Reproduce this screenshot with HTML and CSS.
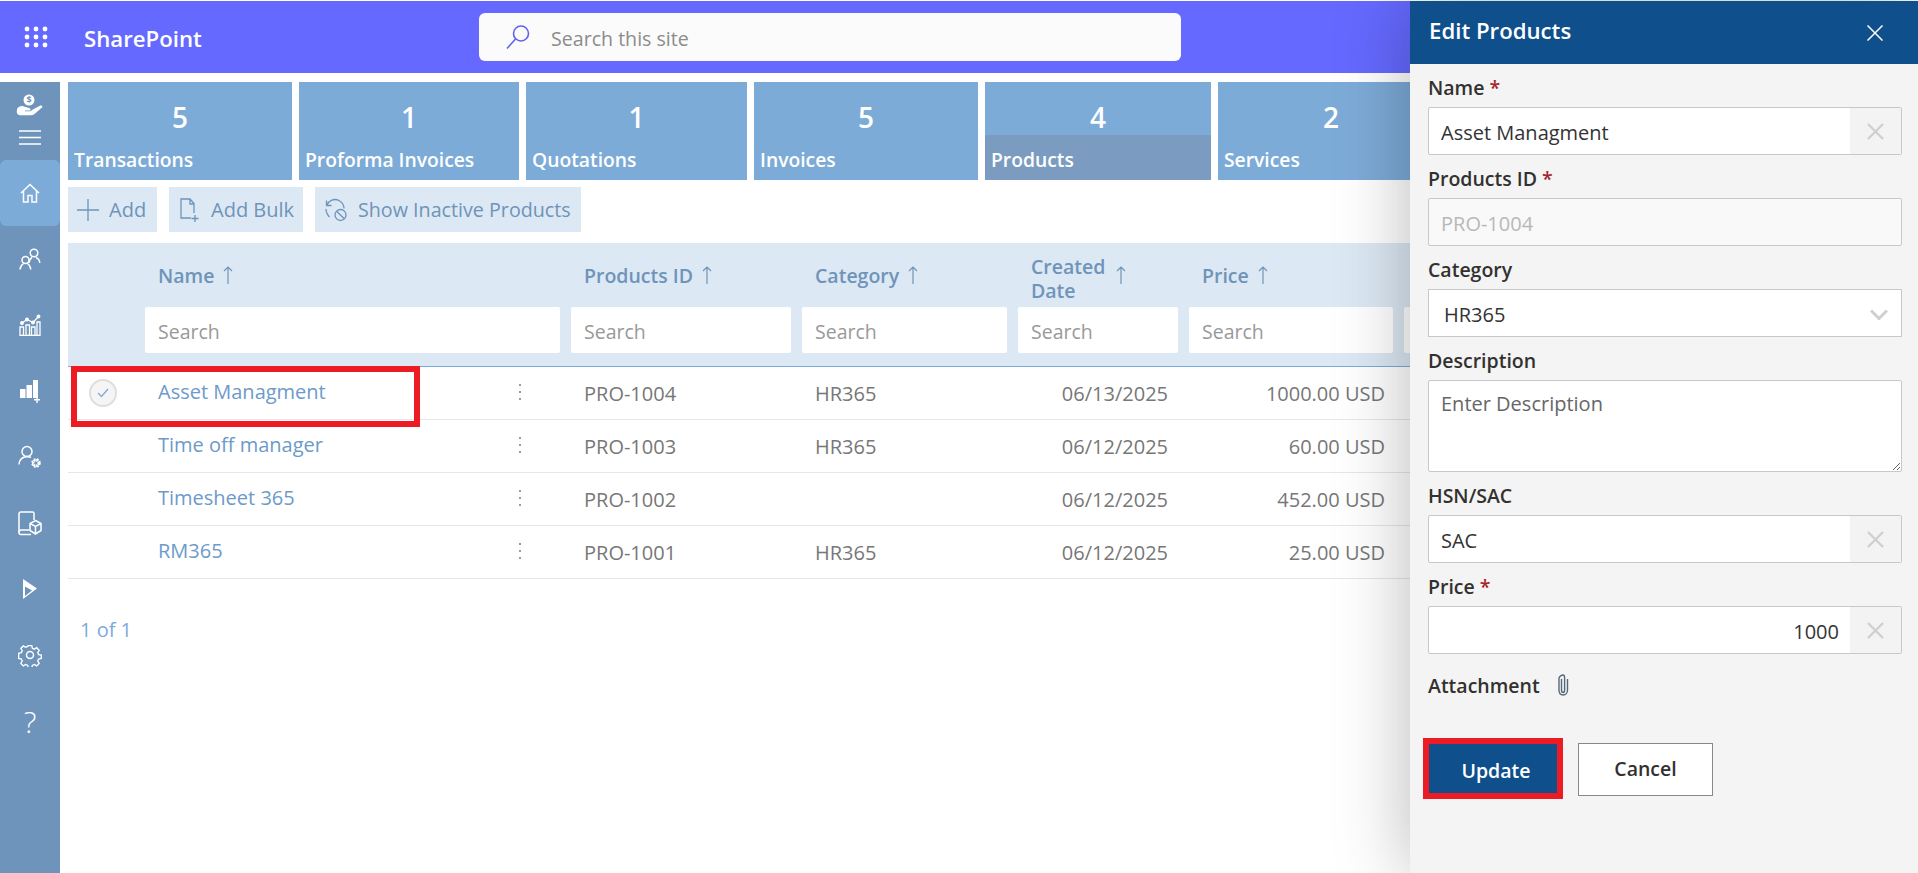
FILE: index.html
```html
<!DOCTYPE html>
<html lang="en">
<head>
    <meta charset="UTF-8">
    <meta name="viewport" content="width=device-width, initial-scale=1.0">
    <title>Edit Products</title>
    <link rel="stylesheet" href="styles.css">
</head>
<body>
    <div class="top-bar">
        <svg class="waffle" width="24" height="22" viewBox="0 0 24 22" fill="#fff">
            <circle cx="3" cy="3" r="2.4"/><circle cx="12" cy="3" r="2.4"/><circle cx="21" cy="3" r="2.4"/>
            <circle cx="3" cy="11" r="2.4"/><circle cx="12" cy="11" r="2.4"/><circle cx="21" cy="11" r="2.4"/>
            <circle cx="3" cy="19" r="2.4"/><circle cx="12" cy="19" r="2.4"/><circle cx="21" cy="19" r="2.4"/>
        </svg>
        <div class="brand">SharePoint</div>
        <div class="site-search">
            <svg width="26" height="26" viewBox="0 0 26 26" fill="none" stroke="#5f63f0" stroke-width="1.6">
                <circle cx="16" cy="9.5" r="7.5"/><path d="M10.5 15 2 24.5"/>
            </svg>
            <span>Search this site</span>
        </div>
    </div>

    <div class="app">
        <div class="sidebar">
            <div class="side-top">
                <svg width="28" height="22" viewBox="0 0 28 22" fill="#fff">
                    <circle cx="13" cy="6" r="5.5"/>
                    <text x="13" y="9" class="dollar">$</text>
                    <path d="M1 15c2-3 5-3.500 7-2.500l5 1.500c2 .5 2 2.500 0 2.500H9v.8h5l5.500-3.300 5-2.500c1.500-.5 2.500 1 1.500 2l-7.500 6.500c-1 .8-2 1.200-3.500 1.200H5c-3 0-5-1.500-4-5.200z"/>
                </svg>
                <svg width="22" height="15" viewBox="0 0 22 15" stroke="#fff" stroke-width="1.300">
                    <path d="M0 1h22M0 7.500h22M0 14h22"/>
                </svg>
            </div>
            <div class="side-item active">
                <svg width="20" height="20" viewBox="0 0 20 20" fill="none" stroke="#fff" stroke-width="1.500">
                    <path d="M1 10 10 1.500 19 10M3.500 8v11h4.500v-6.500h4V19h4.500V8"/>
                </svg>
            </div>
            <div class="side-item">
                <svg width="22" height="22" viewBox="0 0 22 22" fill="none" stroke="#fff" stroke-width="1.500">
                    <circle cx="15" cy="5" r="3.800"/><path d="M10 15c.5-4 2-5 3-5.500M17 9.500c2 .8 3.500 2.500 3.800 5.500"/>
                    <circle cx="6.500" cy="12" r="3.500"/><path d="M1 21.500c.3-3 2-5 3.500-6M8.500 15.500c1.500 1 3 3 3.300 6"/>
                </svg>
            </div>
            <div class="side-item">
                <svg width="22" height="22" viewBox="0 0 22 22" fill="none" stroke="#fff" stroke-width="1.300">
                    <path d="M1 21.500h20"/>
                    <path d="M1 13h3.500v8.500H1zM7 11h3.500v10.500H7zM12.500 13h3.500v8.500h-3.500zM18 8h3v13.500h-3z"/>
                    <path d="M3 9l5-3.500 6 3L19.500 2.500"/>
                    <circle cx="3" cy="9" r="1.300" fill="#fff"/><circle cx="8" cy="5.500" r="1.300" fill="#fff"/><circle cx="14" cy="8.500" r="1.300" fill="#fff"/><circle cx="19.500" cy="2.500" r="1.300" fill="#fff"/>
                </svg>
            </div>
            <div class="side-item">
                <svg width="22" height="24" viewBox="0 0 22 24" fill="#fff">
                    <path d="M1 10h5.500v9H1zM7.500 6H13v13H7.500zM14 1h5v18h-5z"/>
                    <path d="M15 20h6v1.400h-6zM17.300 18h1.400v6h-1.400z"/>
                </svg>
            </div>
            <div class="side-item">
                <svg width="24" height="24" viewBox="0 0 24 24" fill="none" stroke="#fff" stroke-width="1.500">
                    <circle cx="9" cy="6.500" r="5"/><path d="M1 19.500c.3-4.500 3-7.500 8-8 2 0 3 .5 4 1"/>
                    <circle cx="18" cy="18" r="2.800" stroke-width="2.400" stroke-dasharray="2 .6"/>
                    <circle cx="18" cy="18" r="4" stroke-width="1.600" stroke-dasharray="1.800 1.400"/>
                </svg>
            </div>
            <div class="side-item">
                <svg width="24" height="25" viewBox="0 0 24 25" fill="none" stroke="#fff" stroke-width="1.500">
                    <path d="M13 23.500H3c-1.300 0-2-1-2-2V3c0-1 .7-2 2-2h11.500c1 0 1.500.7 1.500 1.500V9"/>
                    <path d="M1 21.500c0-1.500 1-2.500 2-2.500h8"/>
                    <path d="M17.500 9.500 23 12.500v7l-5.500 3.500-5.500-3.500v-7zM12 12.500l5.500 3 5.500-3M17.500 15.500V23"/>
                </svg>
            </div>
            <div class="side-item">
                <svg width="14" height="20" viewBox="0 0 14 20" fill="#fff">
                    <path d="M0 0 14 9.500 0 20zM2 7.500v9.500L9 11.500z" fill-rule="evenodd"/>
                </svg>
            </div>
            <div class="side-item">
                <svg width="24" height="24" viewBox="0 0 24 24" fill="none" stroke="#fff" stroke-width="1.500">
                    <circle cx="12" cy="12" r="3.500"/>
                    <path d="M10 1.500h4l.6 3 2.200 1 2.600-1.600 2.800 2.800-1.600 2.600 1 2.200 3 .6v0l-.1 3.800-2.900.6-1 2.200 1.600 2.600-2.800 2.800-2.600-1.600-2.200 1-.6 3h-4l-.6-3-2.200-1-2.600 1.600-2.800-2.800 1.600-2.600-1-2.200-3-.6V10.100l3-.6 1-2.200-1.600-2.600 2.800-2.800 2.600 1.600 2.200-1z" transform="translate(1.200 1.200) scale(.9)"/>
                </svg>
            </div>
            <div class="side-item help">?</div>
        </div>

        <div class="main">
            <div class="tiles">
                <div class="tile w-224"><div class="tile-num">5</div><div class="tile-label">Transactions</div></div>
                <div class="tile w-220"><div class="tile-num">1</div><div class="tile-label">Proforma Invoices</div></div>
                <div class="tile w-221"><div class="tile-num">1</div><div class="tile-label">Quotations</div></div>
                <div class="tile w-224"><div class="tile-num">5</div><div class="tile-label">Invoices</div></div>
                <div class="tile w-226 current"><div class="tile-num">4</div><div class="tile-label">Products</div></div>
                <div class="tile w-226"><div class="tile-num">2</div><div class="tile-label">Services</div></div>
            </div>

            <div class="toolbar">
                <div class="tool tool-add">
                    <svg width="22" height="22" viewBox="0 0 22 22" stroke="#6f94b9" stroke-width="1.300"><path d="M11 0v22M0 11h22"/></svg>
                    <span>Add</span>
                </div>
                <div class="tool tool-bulk">
                    <svg width="19" height="24" viewBox="0 0 19 24" fill="none" stroke="#6f94b9" stroke-width="1.300">
                        <path d="M11 20H1V1h9l4 4.500V15M10 1v5h4M15 17v7M11.500 20.500h7"/>
                    </svg>
                    <span>Add Bulk</span>
                </div>
                <div class="tool tool-inactive">
                    <svg width="22" height="24" viewBox="0 0 22 24" fill="none" stroke="#6f94b9" stroke-width="1.300">
                        <path d="M2 7C4 2.500 9 0 14 2.500c3.500 2 5 4.500 5 8M1 11c0 3.500 1.500 6 3.500 8M1.500 2.500V7.500h5"/>
                        <circle cx="15.500" cy="17" r="5.500"/><path d="M11.700 13.200l7.600 7.600"/>
                    </svg>
                    <span>Show Inactive Products</span>
                </div>
            </div>

            <div class="list">
                <div class="list-head">
                    <div class="head-cell col-name">Name <svg class="sort" width="10" height="18" viewBox="0 0 10 18" fill="none" stroke="#6f94b9" stroke-width="1.200"><path d="M5 18V1M1 5l4-4 4 4"/></svg></div>
                    <div class="head-cell">Products ID <svg class="sort" width="10" height="18" viewBox="0 0 10 18" fill="none" stroke="#6f94b9" stroke-width="1.200"><path d="M5 18V1M1 5l4-4 4 4"/></svg></div>
                    <div class="head-cell">Category <svg class="sort" width="10" height="18" viewBox="0 0 10 18" fill="none" stroke="#6f94b9" stroke-width="1.200"><path d="M5 18V1M1 5l4-4 4 4"/></svg></div>
                    <div class="head-cell"><span class="two-line">Created Date</span> <svg class="sort" width="10" height="18" viewBox="0 0 10 18" fill="none" stroke="#6f94b9" stroke-width="1.200"><path d="M5 18V1M1 5l4-4 4 4"/></svg></div>
                    <div class="head-cell">Price <svg class="sort" width="10" height="18" viewBox="0 0 10 18" fill="none" stroke="#6f94b9" stroke-width="1.200"><path d="M5 18V1M1 5l4-4 4 4"/></svg></div>
                    <div class="head-cell"></div>
                    <input class="col-search col-name" placeholder="Search">
                    <input class="col-search" placeholder="Search">
                    <input class="col-search" placeholder="Search">
                    <input class="col-search" placeholder="Search">
                    <input class="col-search" placeholder="Search">
                    <input class="col-search" placeholder="Search">
                </div>

                <div class="row">
                    <div class="check-cell">
                        <div class="check"><svg width="12" height="10" viewBox="0 0 12 10" fill="none" stroke="#7dabd8" stroke-width="1.300"><path d="M1 5l3.500 3.500L11 1"/></svg></div>
                    </div>
                    <div class="name-cell"><a class="item-link">Asset Managment</a><span class="kebab"></span></div>
                    <div class="cell">PRO-1004</div>
                    <div class="cell">HR365</div>
                    <div class="cell date">06/13/2025</div>
                    <div class="cell price">1000.00 USD</div>
                </div>
                <div class="row">
                    <div class="check-cell"></div>
                    <div class="name-cell"><a class="item-link">Time off manager</a><span class="kebab"></span></div>
                    <div class="cell">PRO-1003</div>
                    <div class="cell">HR365</div>
                    <div class="cell date">06/12/2025</div>
                    <div class="cell price">60.00 USD</div>
                </div>
                <div class="row">
                    <div class="check-cell"></div>
                    <div class="name-cell"><a class="item-link">Timesheet 365</a><span class="kebab"></span></div>
                    <div class="cell">PRO-1002</div>
                    <div class="cell"></div>
                    <div class="cell date">06/12/2025</div>
                    <div class="cell price">452.00 USD</div>
                </div>
                <div class="row">
                    <div class="check-cell"></div>
                    <div class="name-cell"><a class="item-link">RM365</a><span class="kebab"></span></div>
                    <div class="cell">PRO-1001</div>
                    <div class="cell">HR365</div>
                    <div class="cell date">06/12/2025</div>
                    <div class="cell price">25.00 USD</div>
                </div>
            </div>

            <div class="pager">1 of 1</div>
        </div>
    </div>

    <div class="row-mark"></div>

    <div class="panel">
        <div class="panel-head">
            <div class="panel-title">Edit Products</div>
            <svg width="16" height="16" viewBox="0 0 16 16" stroke="#fff" stroke-width="1.500"><path d="M.5.500l15 15M15.500.500l-15 15"/></svg>
        </div>
        <div class="panel-body">
            <label class="field-label">Name <span class="req">*</span></label>
            <div class="text-field">
                <input value="Asset Managment">
                <div class="clear"><svg width="17" height="17" viewBox="0 0 17 17" stroke="#cfcfcf" stroke-width="2.400"><path d="M1 1l15 15M16 1 1 16"/></svg></div>
            </div>

            <label class="field-label">Products ID <span class="req">*</span></label>
            <div class="text-field disabled"><input value="PRO-1004" disabled></div>

            <label class="field-label">Category</label>
            <div class="select-field">
                <span>HR365</span>
                <svg width="18" height="11" viewBox="0 0 18 11" fill="none" stroke="#cfcfcf" stroke-width="3"><path d="M1 1.500l8 8 8-8"/></svg>
            </div>

            <label class="field-label">Description</label>
            <textarea class="area-field" placeholder="Enter Description"></textarea>

            <label class="field-label">HSN/SAC</label>
            <div class="text-field">
                <input value="SAC">
                <div class="clear"><svg width="17" height="17" viewBox="0 0 17 17" stroke="#cfcfcf" stroke-width="2.400"><path d="M1 1l15 15M16 1 1 16"/></svg></div>
            </div>

            <label class="field-label">Price <span class="req">*</span></label>
            <div class="text-field">
                <input class="num" value="1000">
                <div class="clear"><svg width="17" height="17" viewBox="0 0 17 17" stroke="#cfcfcf" stroke-width="2.400"><path d="M1 1l15 15M16 1 1 16"/></svg></div>
            </div>

            <div class="attach-row">
                <span class="attach-label">Attachment</span>
                <svg width="12" height="22" viewBox="0 0 12 22" fill="none" stroke="#56687c" stroke-width="1.400">
                    <path d="M4.500 5v11c0 1.500.6 2.500 1.600 2.500s1.500-1 1.500-2.500V4C7.600 2 7 1 6 1S2 2 2 4.500V16c0 3 1.600 5 4.100 5S10.500 19 10.500 16V5"/>
                </svg>
            </div>

            <div class="actions">
                <button class="btn-update">Update</button>
                <button class="btn-cancel">Cancel</button>
            </div>
        </div>
    </div>
</body>
</html>
```

FILE: styles.css
```css
* {
    box-sizing: border-box;
}

body {
    margin: 0;
    height: 873px;
    overflow: hidden;
    position: relative;
    background-color: #fff;
    font-family: "Open Sans", "Noto Sans", sans-serif;
    font-size: 20px;
    color: #333;
}

.top-bar {
    margin-top: 1px;
    height: 72px;
    background-color: #6569ff;
    display: flex;
    align-items: center;
    padding-left: 24px;
}

.brand {
    margin-left: 36px;
    padding-top: 2px;
    width: 395px;
    color: #fff;
    font-size: 22.2px;
    font-weight: 600;
}

.site-search {
    width: 702px;
    height: 48px;
    background-color: #fbfbfb;
    border-radius: 6px;
    display: flex;
    align-items: center;
    padding-left: 26px;
    color: #8c8c8c;
    font-size: 19.6px;
    gap: 20px;
}

.site-search span {
    padding-top: 2px;
}

.app {
    display: flex;
    padding-top: 9px;
}

.sidebar {
    width: 60px;
    height: 791px;
    flex-shrink: 0;
    background-color: #6e94bb;
}

.side-top {
    height: 78px;
    padding-top: 12px;
    display: flex;
    flex-direction: column;
    align-items: center;
    gap: 14px;
}

.side-item {
    height: 66px;
    display: flex;
    align-items: center;
    justify-content: center;
}

.side-item.active {
    background-color: #7dabd8;
    border-radius: 6px;
}

.side-item.help {
    color: #fff;
    font-size: 30px;
    font-weight: 300;
}

.dollar {
    font-size: 9px;
    font-weight: 700;
    text-anchor: middle;
    fill: #6e94bb;
}

.main {
    flex: 1;
    min-width: 0;
    padding-left: 8px;
    overflow: hidden;
}

.tiles {
    display: flex;
    gap: 7px;
    height: 98px;
}

.tile {
    flex-shrink: 0;
    background-color: #7dabd8;
    color: #fff;
    font-weight: 600;
    display: flex;
    flex-direction: column;
}

.w-220 { width: 220px; }
.w-221 { width: 221px; }
.w-224 { width: 224px; }
.w-226 { width: 226px; }

.tile-num {
    height: 53px;
    padding-top: 16px;
    text-align: center;
    font-size: 28px;
    line-height: 38px;
}

.tile-label {
    flex: 1;
    padding: 10px 0 0 6px;
    font-size: 19.3px;
    line-height: 30px;
}

.tile.current .tile-label {
    background-color: #7b9cc0;
}

.toolbar {
    display: flex;
    margin-top: 7px;
    height: 45px;
}

.tool {
    display: flex;
    align-items: center;
    background-color: #dce8f4;
    color: #6f94b9;
}

.tool-add {
    width: 89px;
    padding-left: 9px;
    gap: 10px;
}

.tool-bulk {
    width: 134px;
    margin-left: 12px;
    padding-left: 11px;
    gap: 12px;
}

.tool-inactive {
    width: 266px;
    margin-left: 12px;
    padding-left: 10px;
    gap: 11px;
    font-size: 19.7px;
    white-space: nowrap;
}

.list {
    margin-top: 11px;
    width: 1450px;
}

.list-head {
    display: grid;
    grid-template-columns: 426px 231px 216px 171px 215px 114px;
    grid-template-rows: 64px 46px;
    height: 124px;
    padding-left: 77px;
    background-color: #dce8f4;
    border-bottom: 1px solid #7dabd8;
}

.head-cell {
    display: flex;
    align-items: center;
    gap: 9px;
    padding-left: 13px;
    color: #6f94b9;
    font-size: 19.5px;
    font-weight: 600;
}

.two-line {
    width: 76px;
    margin-top: 7px;
    line-height: 24px;
}

.col-search {
    width: calc(100% - 11px);
    height: 46px;
    border: 0;
    border-radius: 2px;
    padding: 2px 0 0 13px;
    background-color: #fff;
    font-family: inherit;
    font-size: 19.5px;
}

.col-search:last-child {
    width: 100%;
}

.col-search::placeholder {
    color: #999;
}

.row {
    display: grid;
    grid-template-columns: 77px 426px 231px 216px 171px 215px;
    height: 53px;
    border-bottom: 1px solid #e6e6e6;
    align-items: center;
}

.check-cell {
    display: flex;
    padding-left: 21px;
}

.check {
    width: 28px;
    height: 28px;
    border: 2px solid #dedede;
    border-radius: 50%;
    background-color: #f5f5f5;
    display: flex;
    align-items: center;
    justify-content: center;
}

.name-cell {
    display: flex;
    justify-content: space-between;
    align-items: center;
    padding: 0 50px 3px 13px;
}

.item-link {
    color: #6d9ac9;
}

.kebab {
    width: 2px;
    height: 2px;
    background-color: #9a9a9a;
    box-shadow: 0 -7px 0 #9a9a9a, 0 7px 0 #9a9a9a;
}

.cell {
    padding-left: 13px;
    color: #777;
}

.cell.date,
.cell.price {
    text-align: right;
    padding-left: 0;
}

.cell.date {
    padding-right: 21px;
}

.cell.price {
    padding-right: 19px;
}

.pager {
    margin: 37px 0 0 12px;
    color: #7dabd8;
}

/* red annotation round the selected row */
.row-mark {
    position: absolute;
    left: 71px;
    top: 366px;
    width: 349px;
    height: 61px;
    border: 6px solid #ed1c24;
}

.panel {
    position: absolute;
    left: 1410px;
    top: 1px;
    width: 508px;
    height: 872px;
    background-color: #f4f4f4;
    box-shadow: 0 0 70px rgba(0, 0, 0, 0.28);
}

.panel-head {
    height: 63px;
    background-color: #0f4f8b;
    display: flex;
    align-items: center;
    justify-content: space-between;
    padding: 0 35px 0 19px;
}

.panel-title {
    color: #fff;
    font-size: 22.2px;
    font-weight: 600;
    margin-top: -4px;
}

.panel-body {
    padding: 9px 16px 0 18px;
}

.field-label {
    display: block;
    height: 30px;
    margin-bottom: 4px;
    line-height: 30px;
    font-size: 19.5px;
    font-weight: 600;
    color: #323130;
}

.req {
    color: #a4262c;
}

.text-field {
    display: flex;
    height: 48px;
    margin-bottom: 9px;
    background-color: #fff;
    border: 1px solid #c8c8c8;
    border-radius: 2px;
}

.text-field input {
    flex: 1;
    min-width: 0;
    border: 0;
    padding: 2px 12px 0;
    background-color: transparent;
    font-family: inherit;
    font-size: 20px;
    color: #333;
}

.text-field input.num {
    text-align: right;
    padding-right: 11px;
}

.text-field.disabled {
    background-color: #f9f9f9;
}

.text-field.disabled input {
    color: #b8b8b8;
}

.clear {
    width: 51px;
    background-color: #f3f3f3;
    display: flex;
    align-items: center;
    justify-content: center;
}

.select-field {
    display: flex;
    align-items: center;
    justify-content: space-between;
    height: 48px;
    margin-bottom: 9px;
    padding: 2px 13px 0 15px;
    background-color: #fff;
    border: 1px solid #c8c8c8;
}

.area-field {
    display: block;
    width: 100%;
    height: 92px;
    margin-bottom: 9px;
    padding: 9px 12px;
    background-color: #fff;
    border: 1px solid #c8c8c8;
    border-radius: 2px;
    font-family: inherit;
    font-size: 20px;
}

.area-field::placeholder {
    color: #666;
}

.attach-row {
    display: flex;
    align-items: center;
    gap: 17px;
    margin-top: 19px;
    height: 24px;
    font-size: 19.5px;
    font-weight: 600;
    color: #323130;
}

.actions {
    display: flex;
    align-items: flex-start;
    margin-top: 41px;
    margin-left: -5px;
}

.btn-update {
    width: 140px;
    height: 61px;
    padding: 4px 0 0 6px;
    border: 6px solid #ed1c24;
    background-color: #0f4f8b;
    color: #fff;
    font-family: inherit;
    font-size: 19.5px;
    font-weight: 600;
}

.btn-cancel {
    width: 135px;
    height: 53px;
    margin: 5px 0 0 15px;
    padding: 0 0 2px;
    border: 1px solid #888;
    background-color: #fff;
    color: #323130;
    font-family: inherit;
    font-size: 19.5px;
    font-weight: 600;
}
```
